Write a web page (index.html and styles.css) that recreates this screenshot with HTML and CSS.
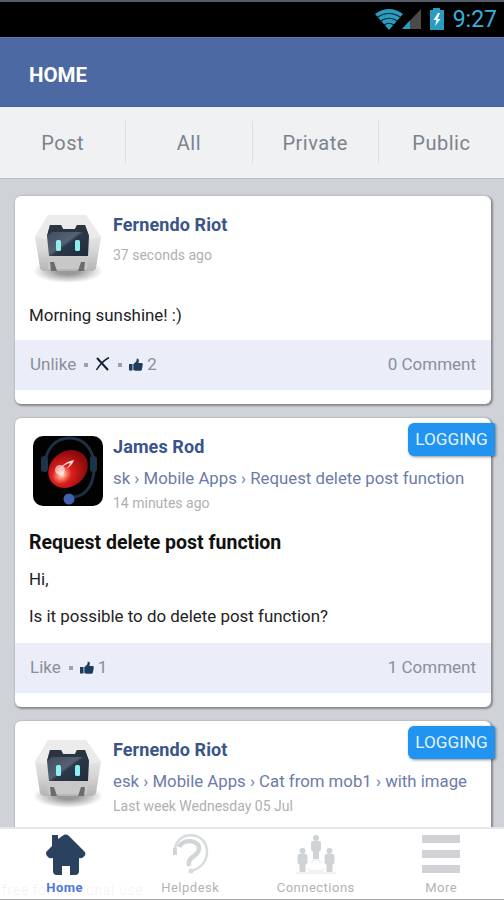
FILE: index.html
```
<!DOCTYPE html>
<html lang="en">
<head>
<meta charset="UTF-8" />
<meta name="viewport" content="width=device-width, initial-scale=1" />
<title>Home</title>
<link rel="stylesheet" href="styles.css">
</head>
<body>

<!-- Shared icons -->
<svg class="sprite" aria-hidden="true">
  <defs>
    <linearGradient id="shell" x1="0" y1="0" x2="0" y2="1">
      <stop offset="0" stop-color="#f4f4f4" />
      <stop offset="0.6" stop-color="#d9d9d9" />
      <stop offset="1" stop-color="#b4b4b4" />
    </linearGradient>
    <linearGradient id="visor" x1="0" y1="0" x2="1" y2="1">
      <stop offset="0" stop-color="#3a4656" />
      <stop offset="0.5" stop-color="#566274" />
      <stop offset="0.56" stop-color="#2c3849" />
      <stop offset="1" stop-color="#1f2b3b" />
    </linearGradient>
    <radialGradient id="ground">
      <stop offset="0.3" stop-color="#000" stop-opacity="0.4" />
      <stop offset="1" stop-color="#000" stop-opacity="0" />
    </radialGradient>
    <radialGradient id="planet" cx="0.3" cy="0.52" r="0.62">
      <stop offset="0" stop-color="#fff0e8" />
      <stop offset="0.16" stop-color="#ff8a72" />
      <stop offset="0.4" stop-color="#dc1f1c" />
      <stop offset="1" stop-color="#8d0a0c" />
    </radialGradient>
  </defs>
  <symbol id="robot" viewBox="0 0 70 70">
    <ellipse cx="35" cy="57" rx="35" ry="12" fill="url(#ground)" />
    <path d="M15 1H53L68 23L63 54Q62 57 58 57H12Q8 57 7 54L2 23Z" fill="url(#shell)" />
    <path d="M15 1H53L68 23L55 25L52 12H18L14 25L2 23Z" fill="#ebebeb" />
    <path d="M14 43H55L54 55H15Z" fill="#c8c8c8" />
    <path d="M17 11H28L30 15H42L44 11H52L56 22L55 42H16L14 22Z" fill="url(#visor)" />
    <path d="M17 11H28L30 15H42L44 11H52L56 22L51 18H19L14 22Z" fill="#2b3542" />
    <rect x="23" y="26" width="5" height="11" rx="1.500" fill="#8df0ee" />
    <rect x="42" y="26" width="5" height="11" rx="1.500" fill="#8df0ee" />
    <path d="M17 48H21L24 57H18ZM48 48H52L51 57H45Z" fill="#6c6c6c" />
  </symbol>
  <symbol id="thumb" viewBox="0 0 14 13">
    <path d="M0 6H3.5V12.5H0ZM4.3 6.3L7.4 3.3L7.8 0.4Q9.9 0.4 9.9 2.6L9.4 4.9H12.6Q14 5 13.8 6.4L12.9 11.4Q12.6 12.7 11.3 12.7H6.4L4.3 12Z" fill="#1d3c5e" />
  </symbol>
</svg>

<!-- Status bar -->
<div class="status-bar">
  <svg class="status-icons" width="70" height="24" viewBox="0 0 70 24">
    <path d="M0 6Q14 -4 28 6L14 22Z" fill="#2a9cc2" />
    <path d="M2 9.500Q14 1.500 26 9.500M5.500 13Q14 7.500 22.500 13M9 17Q14 13.500 19 17" fill="none" stroke="#06222c" stroke-width="1.200" />
    <path d="M46 1V21H27Z" fill="#4a4a4c" />
    <path d="M35 12.500V21H27Z" fill="#2a9cc2" />
    <path d="M58 0H65V2H69V22H55V2H58Z" fill="#2a9cc2" />
    <path d="M63 5L58.500 12H61.500L60 18L65.500 11H62.500L65 5Z" fill="#fff" />
  </svg>
  <span class="clock">9:27</span>
</div>

<header class="app-header">HOME</header>

<!-- Feed filters -->
<nav class="tabs">
  <a class="tab">Post</a>
  <a class="tab">All</a>
  <a class="tab">Private</a>
  <a class="tab">Public</a>
</nav>

<!-- Feed -->
<main class="feed">
  <article class="card">
    <div class="card-head">
      <svg class="avatar" viewBox="0 0 70 70"><use href="#robot" /></svg>
      <div class="meta">
        <div class="author">Fernendo Riot</div>
        <div class="time time-alone">37 seconds ago</div>
      </div>
    </div>
    <div class="card-text">
      <p>Morning sunshine! :)</p>
    </div>
    <div class="card-actions">
      <span class="like">Unlike</span>
      <i class="bullet"></i>
      <svg class="cross" width="15" height="14" viewBox="0 0 15 14">
        <path d="M2 1L13 13" stroke="#0f1d35" stroke-width="2" />
        <path d="M14 0.500Q6 5 1.500 13" fill="none" stroke="#0f1d35" stroke-width="1.500" />
      </svg>
      <i class="bullet"></i>
      <svg class="thumb" width="14" height="13"><use href="#thumb" /></svg>
      <span class="count">2</span>
      <span class="comments">0 Comment</span>
    </div>
  </article>

  <article class="card">
    <span class="badge">LOGGING</span>
    <div class="card-head">
      <svg class="avatar" viewBox="0 0 70 70">
        <rect width="70" height="70" rx="10" fill="#020203" />
        <ellipse cx="35" cy="33" rx="21" ry="17.500" transform="rotate(-38 35 33)" fill="url(#planet)" />
        <circle cx="27" cy="34" r="5" fill="#fff" opacity="0.6" />
        <path d="M26 33Q33 25 41 24Q39 30 33 33Q37 29 37 27Q32 28 27 33Z" fill="#fff" opacity="0.85" />
        <path d="M12 29C13 -7 60 -7 61 29C62 46 54 60 41 61" fill="none" stroke="#1f3044" stroke-width="3" />
        <rect x="8" y="20" width="7" height="16" rx="3" fill="#1d3348" />
        <rect x="57" y="20" width="7" height="16" rx="3" fill="#1d3348" />
        <circle cx="36" cy="63" r="5.500" fill="#3d62b0" />
      </svg>
      <div class="meta">
        <div class="author">James Rod</div>
        <div class="crumbs">sk › Mobile Apps › Request delete post function</div>
        <div class="time">14 minutes ago</div>
      </div>
    </div>
    <div class="card-text">
      <h2>Request delete post function</h2>
      <p>Hi,</p>
      <p>Is it possible to do delete post function?</p>
    </div>
    <div class="card-actions">
      <span class="like">Like</span>
      <i class="bullet"></i>
      <svg class="thumb" width="14" height="13"><use href="#thumb" /></svg>
      <span class="count">1</span>
      <span class="comments">1 Comment</span>
    </div>
  </article>

  <article class="card">
    <span class="badge">LOGGING</span>
    <div class="card-head">
      <svg class="avatar" viewBox="0 0 70 70"><use href="#robot" /></svg>
      <div class="meta">
        <div class="author">Fernendo Riot</div>
        <div class="crumbs">esk › Mobile Apps › Cat from mob1 › with image</div>
        <div class="time">Last week Wednesday 05 Jul</div>
      </div>
    </div>
  </article>
</main>

<!-- Bottom navigation -->
<nav class="bottom-nav">
  <span class="watermark">free for personal use</span>
  <a class="nav-item active">
    <svg width="42" height="42" viewBox="0 0 42 42">
      <path d="M8 1H14V5L19 1.500Q22 -0.500 25 2L40 17Q42.500 20 40.500 22Q38 25 35 24V37Q35 41 31 41H26V32H18V41H13Q9 41 9 37V24Q5 25 3 22Q1 19 3 17L8 12Z" fill="#2a415f" />
    </svg>
    <span>Home</span>
  </a>
  <a class="nav-item">
    <svg width="42" height="42" viewBox="0 0 42 42">
      <path d="M6 19C4 -4 38 -5 38 18C38 28 31 35 22 37" fill="none" stroke="#d9dbdd" stroke-width="2.500" />
      <path d="M10 13C14 4 31 6 30 15C29 23 18 22 20 32" fill="none" stroke="#d2d5d7" stroke-width="4.500" />
      <path d="M6 14V21" stroke="#d2d5d7" stroke-width="4" />
      <circle cx="22" cy="37" r="2.500" fill="#d9dbdd" />
    </svg>
    <span>Helpdesk</span>
  </a>
  <a class="nav-item">
    <svg width="42" height="42" viewBox="0 0 42 42">
      <g fill="#d0d3d6">
        <circle cx="21" cy="4" r="3" />
        <path d="M16 9Q16 7 18 7H24Q26 7 26 9V16L24 18V25H18V18L16 16Z" />
        <circle cx="7.500" cy="17" r="3" />
        <path d="M2.500 22Q2.500 20 4.500 20H10.500Q12.500 20 12.500 22V29L10.500 31V38H4.500V31L2.500 29Z" />
        <circle cx="34.500" cy="17" r="3" />
        <path d="M29.500 22Q29.500 20 31.500 20H37.500Q39.500 20 39.500 22V29L37.500 31V38H31.500V31L29.500 29Z" />
      </g>
      <path d="M16 29L19 26H23L27 29M13 35L15 37H27L29 35M1 39H41" fill="none" stroke="#eceeef" stroke-width="1.500" />
    </svg>
    <span>Connections</span>
  </a>
  <a class="nav-item">
    <svg width="42" height="42" viewBox="0 0 42 42">
      <path d="M2 1H40V9H2ZM2 16H40V24H2ZM2 31H40V39H2Z" fill="#d0d2d6" />
    </svg>
    <span>More</span>
  </a>
</nav>

</body>
</html>
```
FILE: styles.css
```
* {
  box-sizing: border-box;
}

body {
  margin: 0;
  height: 900px;
  display: flex;
  flex-direction: column;
  overflow: hidden;
  background: #cfd3d8;
  font-family: Roboto, "Liberation Sans", sans-serif;
  color: #222;
}

.sprite {
  position: absolute;
  width: 0;
  height: 0;
}

/* Status bar */
.status-bar {
  flex: none;
  height: 37px;
  display: flex;
  justify-content: flex-end;
  align-items: center;
  padding: 1px 7px 0 0;
  border-top: 2px solid #555b68;
  background: #000;
}

.status-icons {
  margin-right: 8px;
}

.clock {
  font-size: 23px;
  line-height: 34px;
  color: #35b0de;
}

/* Header */
.app-header {
  flex: none;
  height: 70px;
  padding-left: 29px;
  background: #4c69a4;
  border-top: 1px solid #5f78ad;
  border-bottom: 1px solid #445f9b;
  color: #fff;
  font-size: 20.5px;
  font-weight: 700;
  line-height: 74px;
}

/* Filters */
.tabs {
  flex: none;
  height: 72px;
  display: flex;
  align-items: center;
  background: #eff1f3;
  border-bottom: 1px solid #b9bcc0;
}

.tab {
  flex: 1;
  height: 43px;
  line-height: 45px;
  text-align: center;
  font-size: 20px;
  letter-spacing: 0.5px;
  color: #7d838d;
  border-right: 1px solid #dcdee1;
}

.tab:last-child {
  border-right: none;
}

/* Feed */
.feed {
  flex: 1;
  min-height: 0;
  overflow: hidden;
  padding: 17px 13px 0 15px;
}

.card {
  position: relative;
  margin-bottom: 14px;
  padding-bottom: 14px;
  background: #fff;
  border-radius: 6px;
  box-shadow: 1px 1px 2px 1px rgba(0, 0, 0, 0.35);
}

.card-head {
  display: flex;
  height: 102px;
  padding: 17px 20px 0 18px;
}

.avatar {
  flex: none;
  width: 70px;
  height: 70px;
  margin-top: 1px;
}

.meta {
  flex: 1;
  min-width: 0;
  padding-left: 10px;
}

.author {
  font-size: 18px;
  font-weight: 700;
  line-height: 24px;
  letter-spacing: 0.1px;
  color: #3a5488;
}

.crumbs {
  margin-top: 7px;
  font-size: 16.8px;
  line-height: 24px;
  white-space: nowrap;
  color: #6c7baa;
}

.time {
  margin-top: 4px;
  font-size: 14px;
  line-height: 18px;
  color: #b0b0b0;
}

.time-alone {
  margin-top: 9px;
}

.card-text {
  padding: 5px 14px 13px;
  font-size: 16.9px;
  line-height: 24px;
}

.card-text p {
  margin: 0;
}

.card-text h2 {
  margin: 6px 0 12px;
  font-size: 19.5px;
  font-weight: 700;
  line-height: 24px;
  color: #111;
}

.card-text p + p {
  margin: 13px 0 2px;
}

.card-actions {
  display: flex;
  align-items: center;
  height: 50px;
  padding: 0 15px 2px;
  background: #ebeef8;
  font-size: 17px;
  color: #8a8f99;
}

.bullet {
  width: 4px;
  height: 4px;
  margin: 2px 7px 0 8px;
  background: #9ca1ac;
}

.count {
  margin-left: 4px;
}

.comments {
  margin-left: auto;
}

.badge {
  position: absolute;
  top: 5px;
  right: -4px;
  width: 87px;
  height: 33px;
  border-radius: 6px 2px 2px 6px;
  background: #2193f0;
  box-shadow: 1px 1px 3px rgba(0, 0, 0, 0.45);
  color: #e3f2ff;
  font-size: 17.2px;
  line-height: 32px;
  text-align: center;
}

/* Bottom navigation */
.bottom-nav {
  position: relative;
  flex: none;
  height: 73px;
  display: flex;
  border-top: 2px solid #e6e7e9;
  border-bottom: 1px solid #a4a4a4;
  background: #fff;
}

.nav-item {
  flex: 1;
  display: flex;
  flex-direction: column;
  align-items: center;
  padding-top: 5px;
  font-size: 13px;
  line-height: 16px;
  letter-spacing: 0.5px;
  color: #b3b3b5;
}

.nav-item span {
  margin-top: 4px;
}

.nav-item.active {
  padding-left: 2px;
  color: #4f7ae0;
  font-weight: 700;
}

.watermark {
  position: absolute;
  left: 2px;
  bottom: 0;
  font-size: 14px;
  line-height: 18px;
  letter-spacing: 0.6px;
  white-space: nowrap;
  color: rgba(0, 0, 0, 0.06);
}
```
